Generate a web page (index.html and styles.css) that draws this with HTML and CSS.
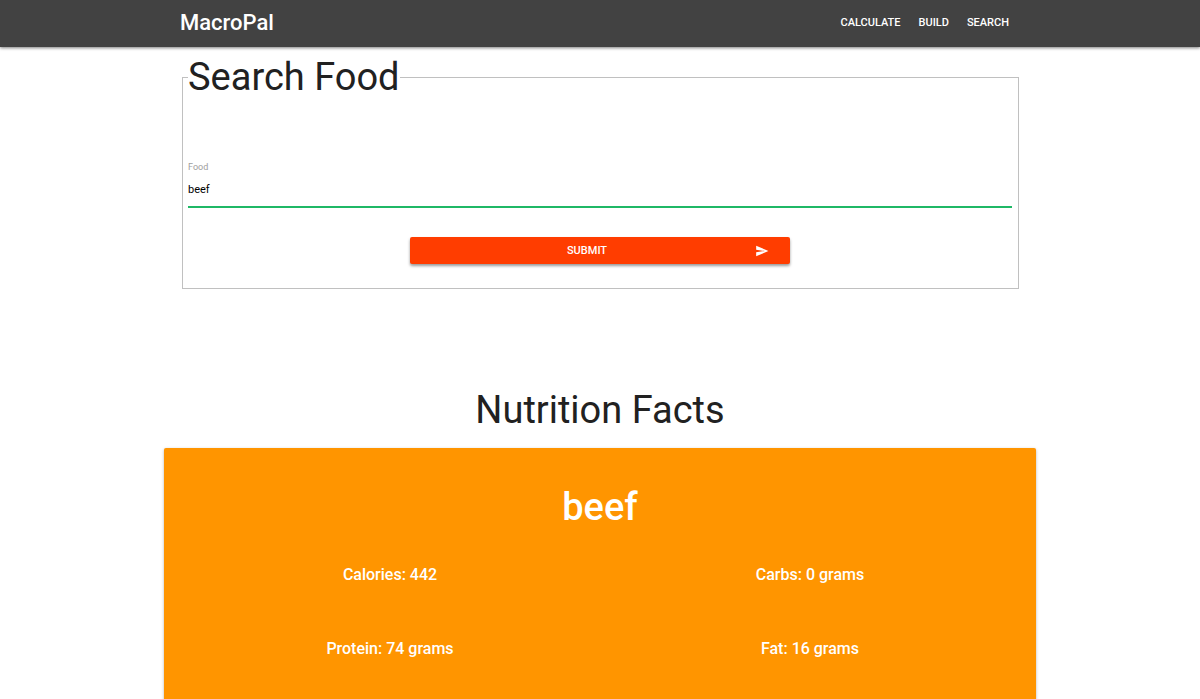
FILE: index.html
```html
<!DOCTYPE html>
<html lang="en">
<head>
<meta charset="utf-8">
<meta name="viewport" content="width=device-width, initial-scale=1">
<title>MacroPal</title>
<link rel="stylesheet" href="styles.css">
</head>
<body>
<header class="navbar">
  <nav class="container navbar-inner">
    <a class="brand" href="#">MacroPal</a>
    <ul class="nav-links">
      <li><a href="#calculate">Calculate</a></li>
      <li><a href="#build">Build</a></li>
      <li><a href="#search">Search</a></li>
    </ul>
  </nav>
</header>
<main class="container">
  <form class="search-form">
    <fieldset class="search-box">
      <legend>Search Food</legend>
      <div class="field">
        <label for="food">Food</label>
        <input id="food" type="text" value="beef">
      </div>
      <button class="submit" type="submit">
        <span class="submit-text">Submit</span>
        <svg class="send" viewBox="0 0 24 24" aria-hidden="true"><path d="M2.01 21 23 12 2.01 3 2 10l15 2-15 2z"/></svg>
      </button>
    </fieldset>
  </form>
  <section class="results">
    <h2 class="results-title">Nutrition Facts</h2>
    <div class="card">
      <h3 class="card-title">beef</h3>
      <div class="facts">
        <p>Calories: 442</p>
        <p>Carbs: 0 grams</p>
        <p>Protein: 74 grams</p>
        <p>Fat: 16 grams</p>
      </div>
    </div>
  </section>
</main>
</body>
</html>
```
FILE: styles.css
```css
* {
  box-sizing: border-box;
}

body {
  margin: 0;
  font-family: Roboto, "Liberation Sans", sans-serif;
  color: #212121;
  background: #fff;
}

.container {
  width: 100%;
  max-width: 872px;
  margin: 0 auto;
}

.navbar {
  background: #424242;
  box-shadow: 0 1px 3px rgba(0, 0, 0, 0.5);
}

.navbar-inner {
  display: flex;
  align-items: center;
  justify-content: space-between;
  height: 47px;
  padding: 0 16px 2px;
}

.brand,
.nav-links a {
  display: block;
  color: #fff;
  font-weight: 500;
  line-height: 44px;
  text-decoration: none;
}

.brand {
  font-size: 22px;
}

.nav-links {
  display: flex;
  margin: 0;
  padding: 0 11px 0 0;
  gap: 18px;
  list-style: none;
}

.nav-links a {
  font-size: 11px;
  text-transform: uppercase;
}

.search-form {
  padding: 8px 17px 0 18px;
}

.search-box {
  min-width: 0;
  margin: 0;
  padding: 0 6px 24px 5px;
  border: 1px solid #c0c0c0;
}

.search-box legend {
  padding: 0;
  font-size: 38px;
  line-height: 45px;
}

.field {
  display: flex;
  flex-direction: column;
  margin-top: 61px;
}

.field label {
  font-size: 9px;
  line-height: 12px;
  color: #9e9e9e;
}

.field input {
  width: 100%;
  height: 35px;
  padding: 0;
  border: 0;
  border-bottom: 2px solid #1fb866;
  outline: 0;
  background: transparent;
  font-family: inherit;
  font-size: 11px;
  color: #000;
}

.submit {
  display: grid;
  grid-template-columns: 1fr auto;
  align-items: center;
  column-gap: 12px;
  width: 46%;
  height: 27px;
  margin: 29px auto 0;
  padding: 0 21px;
  border: 0;
  border-radius: 2px;
  background: #ff3d00;
  box-shadow: 0 2px 3px rgba(0, 0, 0, 0.4);
  color: #fff;
  font-family: inherit;
  font-size: 11px;
  font-weight: 500;
  text-transform: uppercase;
}

.send {
  width: 14px;
  height: 14px;
  fill: currentColor;
}

.results {
  padding-top: 97px;
}

.results-title {
  margin: 0;
  font-size: 38px;
  font-weight: 400;
  line-height: 48px;
  text-align: center;
}

.card {
  margin-top: 14px;
  padding: 35px 16px 40px;
  border-radius: 2px;
  background: #ff9500;
  box-shadow: 0 1px 3px rgba(0, 0, 0, 0.3);
  color: #fff;
  text-align: center;
}

.card-title {
  margin: 0;
  font-size: 38px;
  font-weight: 500;
  line-height: 48px;
}

.facts {
  display: grid;
  grid-template-columns: 1fr 1fr;
  row-gap: 50px;
  margin-top: 32px;
}

.facts p {
  margin: 0;
  font-size: 16px;
  font-weight: 500;
  line-height: 24px;
}
```
